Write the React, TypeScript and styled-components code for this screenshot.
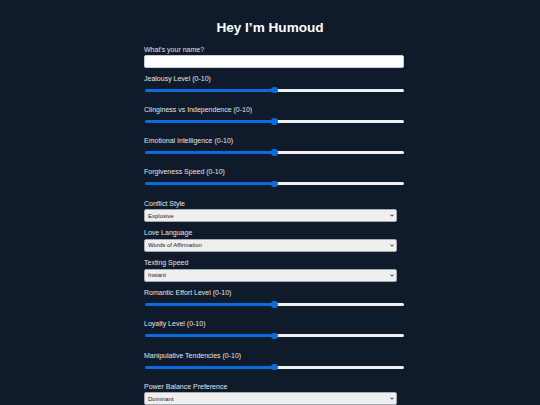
import React, { useState } from "react";
import styled, { createGlobalStyle } from "styled-components";

const Global = createGlobalStyle`
  html, body { margin: 0; padding: 0; background: #0f1a2b; }
  body { font-family: "Liberation Sans", Arial, sans-serif; color: #e6e8eb; overflow: hidden; }
`;

const Page = styled.div`
  display: flex;
  flex-direction: column;
  align-items: center;
  width: 540px;
  height: 405px;
  overflow: hidden;
`;

const Title = styled.h1`
  margin: 19px 0 0 0;
  font-size: 13.6px;
  line-height: 18px;
  font-weight: 700;
  color: #ffffff;
`;

const Form = styled.form`
  width: 260px;
  margin: 7.5px 0 0 8px;
  display: flex;
  flex-direction: column;
`;

const Field = styled.div<{ $kind: "text" | "range" | "select" }>`
  display: flex;
  flex-direction: column;
  gap: ${(p) => (p.$kind === "range" ? "4px" : "1.5px")};
  margin-bottom: ${(p) => (p.$kind === "range" ? "11.25px" : p.$kind === "select" ? "6.4px" : "5.5px")};
`;

const Label = styled.label`
  font-size: 7px;
  line-height: 9px;
  color: #e3e5e8;
`;

const TextInput = styled.input`
  display: block;
  box-sizing: border-box;
  width: 260px;
  height: 13px;
  margin: 0;
  border: 1px solid #c9ced6;
  border-radius: 2px;
  background: #ffffff;
  padding: 0 3px;
  font-size: 6px;
`;

const Range = styled.input`
  display: block;
  -webkit-appearance: none;
  appearance: none;
  width: 259px;
  height: 3px;
  margin: 2px 0 2px 1px;
  border-radius: 2px;
  border: none;
  outline: none;
  &::-webkit-slider-thumb {
    -webkit-appearance: none;
    appearance: none;
    width: 6.5px;
    height: 6.5px;
    border-radius: 50%;
    background: #0d6be0;
    border: none;
  }
`;

const SelectWrap = styled.div`
  position: relative;
  width: 253px;
  height: 13px;
`;

const Select = styled.select`
  display: block;
  -webkit-appearance: none;
  appearance: none;
  box-sizing: border-box;
  width: 253px;
  height: 13px;
  margin: 0;
  padding: 0 3px;
  border: 1px solid #a4aab2;
  border-radius: 2px;
  background: #efefef;
  color: #222;
  font-family: "Liberation Sans", Arial, sans-serif;
  font-size: 6px;
  outline: none;
`;

const Chevron = styled.svg`
  position: absolute;
  right: 3px;
  top: 5px;
  width: 4px;
  height: 3px;
  pointer-events: none;
`;

type Item =
  | { kind: "range"; label: string }
  | { kind: "select"; label: string; options: string[] };

const items: Item[] = [
  { kind: "range", label: "Jealousy Level (0-10)" },
  { kind: "range", label: "Clinginess vs Independence (0-10)" },
  { kind: "range", label: "Emotional Intelligence (0-10)" },
  { kind: "range", label: "Forgiveness Speed (0-10)" },
  { kind: "select", label: "Conflict Style", options: ["Explosive", "Calm", "Avoidant"] },
  { kind: "select", label: "Love Language", options: ["Words of Affirmation", "Quality Time", "Gifts"] },
  { kind: "select", label: "Texting Speed", options: ["Instant", "Slow", "Never"] },
  { kind: "range", label: "Romantic Effort Level (0-10)" },
  { kind: "range", label: "Loyalty Level (0-10)" },
  { kind: "range", label: "Manipulative Tendencies (0-10)" },
  { kind: "select", label: "Power Balance Preference", options: ["Dominant", "Equal", "Submissive"] },
];

function Slider() {
  const [v, setV] = useState(5);
  const pct = (v / 10) * 100;
  return (
    <Range
      type="range"
      min={0}
      max={10}
      value={v}
      onChange={(e) => setV(Number(e.target.value))}
      style={{
        background: `linear-gradient(to right, #0d6be0 0%, #0d6be0 ${pct}%, #f0f0f0 ${pct}%, #f0f0f0 100%)`,
      }}
    />
  );
}

export default function App() {
  return (
    <>
      <Global />
      <Page>
        <Title>Hey I’m Humoud</Title>
        <Form>
          <Field $kind="text">
            <Label>What's your name?</Label>
            <TextInput type="text" />
          </Field>
          {items.map((it) =>
            it.kind === "range" ? (
              <Field $kind="range" key={it.label}>
                <Label>{it.label}</Label>
                <Slider />
              </Field>
            ) : (
              <Field $kind="select" key={it.label}>
                <Label>{it.label}</Label>
                <SelectWrap>
                  <Select defaultValue={it.options[0]}>
                    {it.options.map((o) => (
                      <option key={o}>{o}</option>
                    ))}
                  </Select>
                  <Chevron viewBox="0 0 4 3">
                    <path d="M0.5 0.6 L2 2.2 L3.5 0.6" stroke="#222" strokeWidth="1" fill="none" />
                  </Chevron>
                </SelectWrap>
              </Field>
            )
          )}
        </Form>
      </Page>
    </>
  );
}
